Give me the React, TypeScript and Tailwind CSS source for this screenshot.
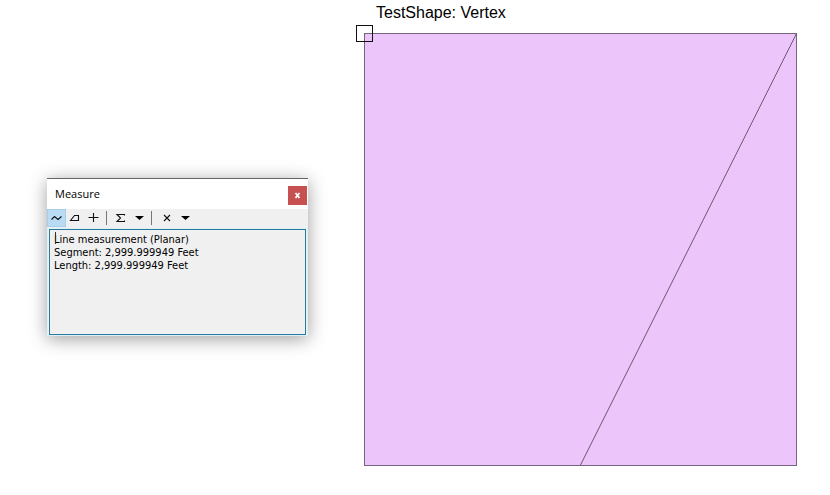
import { useState, type ReactNode } from "react";

function ToolButton({ label, active = false, children }: { label: string; active?: boolean; children: ReactNode }) {
  return (
    <button
      type="button"
      aria-label={label}
      aria-pressed={active}
      className={`h-[18px] w-[19px] shrink-0 ${active ? "bg-[#b9dcf4] outline outline-1 -outline-offset-1 outline-[#a3cdea]" : ""}`}
    >
      <svg viewBox="0 0 19 18" className="h-[18px] w-[19px]" fill="none" stroke="#111" strokeWidth="1.1">
        {children}
      </svg>
    </button>
  );
}

function Separator() {
  return <span role="separator" className="mt-[2px] mr-1 ml-0.5 h-[14px] w-px shrink-0 bg-[#777]" />;
}

function MeasureWindow() {
  const [open, setOpen] = useState(true);
  if (!open) return <aside className="w-[261px] shrink-0" />;
  return (
    <aside
      aria-label="Measure"
      className="mt-[178px] w-[261px] shrink-0 border-t border-[#666] bg-[#f0f0f0] shadow-[0_3px_17px_rgba(0,0,0,0.38)]"
    >
      <header className="flex h-[30px] items-center justify-between bg-white pr-px pl-2">
        <h1 className="font-['Open_Sans',sans-serif] text-[11px] leading-4 text-black">Measure</h1>
        <button
          type="button"
          aria-label="Close"
          onClick={() => setOpen(false)}
          className="mt-[3px] flex h-[19px] w-[19px] items-center justify-center bg-[#c75050]"
        >
          <svg viewBox="0 0 7 7" className="h-[7px] w-[7px]" stroke="#fff" strokeWidth="1.8">
            <path d="M1.500 1L5.500 6M5.500 1L1.500 6" />
          </svg>
        </button>
      </header>
      <div role="toolbar" aria-label="Measure tools" className="flex h-[19px]">
        <ToolButton label="Measure line" active>
          <path d="M4.5 10.5L7.5 7.5L11 10.5L14.5 7.5" />
        </ToolButton>
        <ToolButton label="Measure area">
          <path d="M4.5 11.5L8.5 6.5H12.5V11.5Z" />
        </ToolButton>
        <ToolButton label="Measure feature">
          <path d="M3.500 8.500H13.500M8.500 4V13" />
        </ToolButton>
        <Separator />
        <ToolButton label="Show total">
          <path d="M13.500 6.500V5.500H6L9.500 9L6 12.500H13.500V11.500" />
        </ToolButton>
        <ToolButton label="Choose units">
          <path d="M5 7H14L9.500 11Z" fill="#000" stroke="none" />
        </ToolButton>
        <Separator />
        <ToolButton label="Clear and reset results">
          <path d="M8 6L14 12M14 6L8 12" />
        </ToolButton>
        <ToolButton label="Choose measurement type">
          <path d="M6 7H15L10.500 11Z" fill="#000" stroke="none" />
        </ToolButton>
      </div>
      <div className="relative border border-[#dcf0fa] px-px">
        <textarea
          readOnly
          aria-label="Measurement results"
          className="block h-[106px] w-full resize-none overflow-hidden border border-[#2a7a9e] bg-[#f0f0f0] px-1 pt-[3px] font-['DejaVu_Sans_Condensed','DejaVu_Sans',sans-serif] text-[11px] leading-[13px] text-black outline-none"
          value={"Line measurement (Planar)\nSegment: 2,999.999949 Feet\nLength: 2,999.999949 Feet"}
        />
        <span aria-hidden="true" className="absolute top-[3px] left-[7px] h-3 w-px bg-[#333]" />
      </div>
    </aside>
  );
}

function ParcelMap() {
  return (
    <figure className="flex-1">
      <figcaption className="h-[33px] pt-1 pl-3 font-['Liberation_Sans',Arial,sans-serif] text-[16px] leading-[18px] text-black">
        TestShape: Vertex
      </figcaption>
      <svg viewBox="0 0 433 433" className="block w-full overflow-visible" role="img" aria-label="Square parcel with a measured line">
        <rect x="0.5" y="0.5" width="432" height="432" fill="#ecc5fa" stroke="#74657a" />
        <path d="M216.500 432L432.500 0.500" stroke="#6b5873" strokeWidth="1" />
        <rect x="-7.500" y="-7.500" width="16" height="16" fill="none" stroke="#111" />
      </svg>
    </figure>
  );
}

export default function App() {
  return (
    <main className="flex min-h-screen items-start gap-14 bg-white pr-[33px] pl-[47px]">
      <MeasureWindow />
      <ParcelMap />
    </main>
  );
}
